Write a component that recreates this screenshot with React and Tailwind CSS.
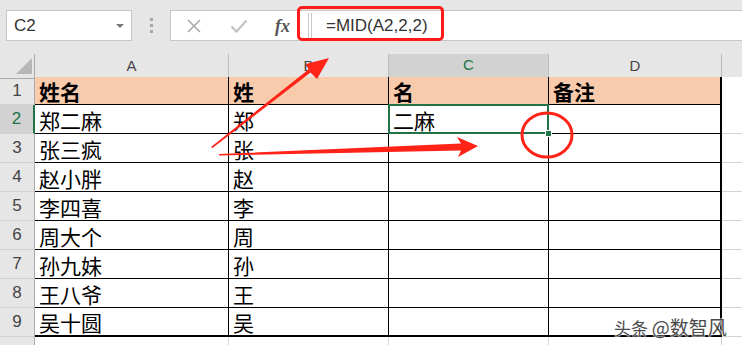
import React from 'react';

const cols = ['A', 'B', 'C', 'D'];
const rows = [
  ['姓名', '姓', '名', '备注'],
  ['郑二麻', '郑', '二麻', ''],
  ['张三疯', '张', '', ''],
  ['赵小胖', '赵', '', ''],
  ['李四喜', '李', '', ''],
  ['周大个', '周', '', ''],
  ['孙九妹', '孙', '', ''],
  ['王八爷', '王', '', ''],
  ['吴十圆', '吴', '', ''],
];

const gridCols = 'grid grid-cols-[35px_194px_160px_160px_173px_1fr]';
const cjk = { fontFamily: '"Noto Sans CJK SC", "Noto Sans", sans-serif' };

const Toolbar = () => (
  <div className="h-[41px] pt-[10px] flex items-stretch font-['Liberation_Sans',sans-serif]">
    {/* name box */}
    <div className="ml-[6px] w-[126px] bg-white border border-[#c6c6c6] flex items-center justify-between pl-[7px] pr-[7px]">
      <span className="text-[17px] text-[#333]">C2</span>
      <span className="w-0 h-0 border-l-[4px] border-r-[4px] border-t-[4px] border-l-transparent border-r-transparent border-t-[#777]" />
    </div>
    {/* grip dots */}
    <div className="w-[38px] flex flex-col items-center justify-center gap-[3px]">
      <span className="w-[3px] h-[3px] bg-[#a8a8a8]" />
      <span className="w-[3px] h-[3px] bg-[#a8a8a8]" />
      <span className="w-[3px] h-[3px] bg-[#a8a8a8]" />
    </div>
    {/* formula bar */}
    <div className="flex-1 bg-white border-y border-l border-[#c6c6c6] flex items-center">
      <div className="w-[134px] flex items-center h-full">
        <svg width="16" height="16" viewBox="0 0 16 16" className="ml-[15px]">
          <path d="M2 2 L14 14 M14 2 L2 14" stroke="#a9a9a9" strokeWidth="1.6" fill="none" />
        </svg>
        <svg width="18" height="16" viewBox="0 0 18 16" className="ml-[28px]">
          <path d="M1.5 8.5 L6.5 13.5 L16.5 2.5" stroke="#c4c4c4" strokeWidth="2.4" fill="none" />
        </svg>
        <span className="ml-[27px] text-[18px] italic font-bold text-[#555] font-['Liberation_Serif',serif] leading-none">fx</span>
      </div>
      <div className="h-full flex items-center gap-[2px] ml-[3px]">
        <span className="w-px h-[26px] bg-[#c8c8c8]" />
        <span className="w-px h-[26px] bg-[#c8c8c8]" />
      </div>
      <span className="ml-[14px] text-[17px] text-[#333]">=MID(A2,2,2)</span>
    </div>
  </div>
);

const HeaderRow = () => (
  <div className={`${gridCols} h-[23px] font-['Liberation_Sans',sans-serif]`}>
    <div className="relative border-r border-b border-[#ababab] bg-[#e6e6e6]">
      <svg width="16" height="16" viewBox="0 0 16 16" className="absolute left-[16px] top-[4px]">
        <path d="M16 0 L16 16 L0 16 Z" fill="#b6b6b6" />
      </svg>
    </div>
    {cols.map((c) => {
      const sel = c === 'C';
      return (
        <div
          key={c}
          className={`flex items-center justify-center text-[15px] border-r border-[#bcbcbc] ${
            sel
              ? 'bg-[#d2d2d2] text-[#217346] border-b-2 border-b-[#217346]'
              : 'bg-[#e6e6e6] text-[#444] border-b border-b-[#ababab]'
          }`}
        >
          {c}
        </div>
      );
    })}
    <div className="bg-[#e6e6e6] border-b border-[#ababab]" />
  </div>
);

const DataRow = ({ idx, data }) => {
  const n = idx + 1;
  const head = idx === 0;
  const last = idx === rows.length - 1;
  const selRow = n === 2;
  return (
    <div className={`${gridCols} ${head ? 'h-[28px]' : 'h-[29px]'}`}>
      <div
        className={`flex items-center justify-center text-[17px] font-['Liberation_Sans',sans-serif] border-b border-b-[#d0d0d0] ${
          selRow
            ? 'bg-[#d2d2d2] text-[#217346] border-r-2 border-r-[#217346]'
            : 'bg-[#e6e6e6] text-[#444] border-r border-r-[#ababab]'
        }`}
      >
        {n}
      </div>
      {data.map((v, i) => {
        const isSel = n === 2 && i === 2;
        return (
          <div
            key={i}
            style={cjk}
            className={`relative flex items-center pl-[4px] pt-[2px] text-[21px] leading-none text-black border-black ${
              head ? 'bg-[#f8cbad] font-bold' : 'bg-white'
            } ${i === 3 ? 'border-r-2' : 'border-r'} ${last ? 'border-b-2' : 'border-b'} ${isSel ? 'z-10' : ''}`}
          >
            {v}
            {isSel && (
              <>
                <div className="absolute -left-px -top-px -right-px -bottom-px border-2 border-[#217346]" />
                <div className="absolute -right-[4px] -bottom-[4px] w-[7px] h-[7px] bg-[#217346] border border-white" />
              </>
            )}
          </div>
        );
      })}
      <div className={`bg-white ${head ? '' : 'border-b border-[#d4d4d4]'}`} />
    </div>
  );
};

const Overlay = () => (
  <svg width="742" height="345" className="absolute left-0 top-0 pointer-events-none z-20">
    {/* arrow to formula */}
    <polygon
      points="211,147 212.5,148 310.5,72.5 317,79 329,58 306,64 308.5,69.5"
      fill="#ff2318"
    />
    {/* arrow to C column */}
    <polygon
      points="219,154 219,155.5 461,150.5 458,157 478,146 457,137 461,143.5"
      fill="#ff2318"
    />
    {/* circle around fill handle */}
    <ellipse cx="547" cy="135" rx="25" ry="22" fill="none" stroke="#ff2318" strokeWidth="3" />
  </svg>
);

export default function App() {
  return (
    <div className="relative w-[742px] h-[345px] overflow-hidden bg-[#e6e6e6]">
      <Toolbar />
      <div className="h-[13px]" />
      <HeaderRow />
      {rows.map((r, i) => (
        <DataRow key={i} idx={i} data={r} />
      ))}
      <div className={`${gridCols} h-[10px]`}>
        <div className="bg-[#e6e6e6] border-r border-[#ababab]" />
        <div className="bg-white border-r border-[#d4d4d4]" />
        <div className="bg-white border-r border-[#d4d4d4]" />
        <div className="bg-white border-r border-[#d4d4d4]" />
        <div className="bg-white border-r border-[#d4d4d4]" />
        <div className="bg-white" />
      </div>

      {/* formula highlight box */}
      <div className="absolute left-[297px] top-[6px] w-[147px] h-[35px] border-[3px] border-[#ff1a1a] rounded-[5px] z-20" />

      <Overlay />

      {/* watermark */}
      <div
        style={cjk}
        className="absolute left-[614px] top-[313px] z-20 text-[#4a4a4a] whitespace-nowrap [text-shadow:0_0_2px_#fff,0_0_2px_#fff,0_0_1px_#fff]"
      >
        <span className="text-[17px]">头条 </span>
        <span className="text-[19px]">@数智风</span>
      </div>
    </div>
  );
}
